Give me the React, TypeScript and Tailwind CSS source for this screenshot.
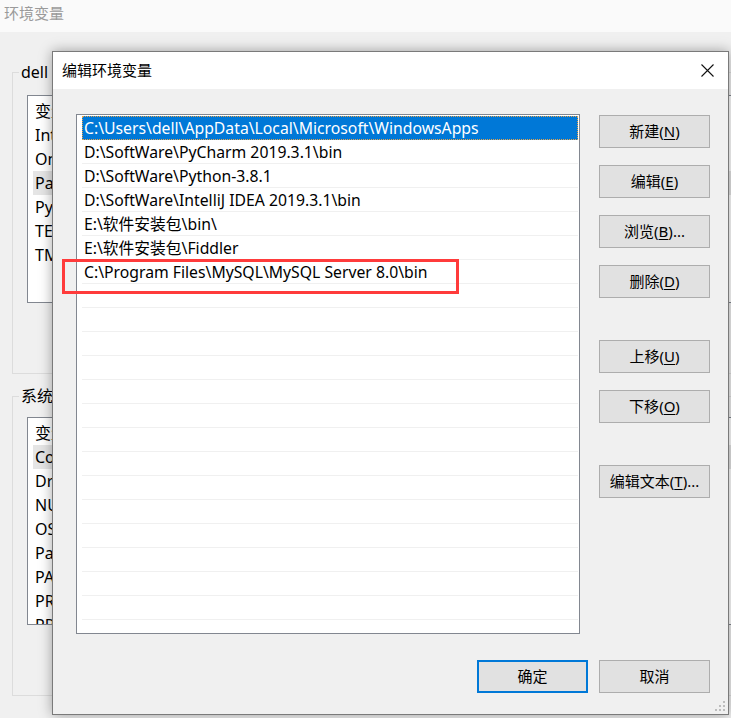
import React from "react";

const FONT = "font-['Noto_Sans','Noto_Sans_CJK_SC',sans-serif]";

const paths = [
  "C:\\Users\\dell\\AppData\\Local\\Microsoft\\WindowsApps",
  "D:\\SoftWare\\PyCharm 2019.3.1\\bin",
  "D:\\SoftWare\\Python-3.8.1",
  "D:\\SoftWare\\IntelliJ IDEA 2019.3.1\\bin",
  "E:\\软件安装包\\bin\\",
  "E:\\软件安装包\\Fiddler",
  "C:\\Program Files\\MySQL\\MySQL Server 8.0\\bin",
];

const userVars = ["IntelliJ IDEA", "OneDrive", "Path", "PyCharm", "TEMP", "TMP"];
const sysVars = [
  "ComSpec",
  "DriverData",
  "NUMBER_OF_PROCESSORS",
  "OS",
  "Path",
  "PATHEXT",
  "PROCESSOR_ARCHITECTURE",
  "PROCESSOR_IDENTIFIER",
];

function Btn({
  label,
  mn,
  suffix = "",
  primary = false,
}: {
  label: string;
  mn?: string;
  suffix?: string;
  primary?: boolean;
}) {
  return (
    <div
      className={`w-[111px] h-[33px] flex items-center justify-center bg-[#e1e1e1] text-[15px] text-black ${
        primary ? "border-2 border-[#0078d7]" : "border border-[#adadad]"
      }`}
    >
      <span>
        {label}
        {mn ? (
          <>
            (<span className="underline underline-offset-2">{mn}</span>)
          </>
        ) : null}
        {suffix}
      </span>
    </div>
  );
}

function ParentList({ rows, hl }: { rows: string[]; hl: number }) {
  return (
    <div className="ml-[14px] w-[720px] h-[208px] border border-[#828790] bg-white overflow-hidden text-[16px] text-black">
      <div className="h-[27px] flex items-center pl-[7px] pt-[2px]">
        <span className="w-[200px]">变量</span>
        <span>值</span>
      </div>
      {rows.map((r, i) => (
        <div
          key={i}
          className={`h-[24px] ml-[5px] pl-[2px] flex items-center ${
            i === hl ? "bg-[#e5e5e5]" : ""
          }`}
        >
          {r}
        </div>
      ))}
    </div>
  );
}

export default function App() {
  const rowCount = 22;
  return (
    <div className={`relative w-[731px] h-[718px] overflow-hidden bg-[#f0f0f0] ${FONT}`}>
      {/* Parent window */}
      <div className="h-[32px] bg-[#fafafa] flex items-center pl-[4px] pb-[5px] text-[15px] text-[#9a9a9a]">
        环境变量
      </div>
      <div className="pl-[12px] pt-[29px] flex flex-col gap-[11px]">
        <fieldset className="w-[760px] h-[313px] border border-[#dcdcdc]">
          <legend className="ml-[6px] px-[2px] text-[16px] text-black leading-[22px]">
            dell 的用户变量(U)
          </legend>
          <div className="mt-[12px]">
            <ParentList rows={userVars} hl={2} />
          </div>
        </fieldset>
        <fieldset className="w-[760px] h-[311px] border border-[#dcdcdc]">
          <legend className="ml-[6px] px-[2px] text-[16px] text-black leading-[22px]">
            系统变量(S)
          </legend>
          <div className="mt-[10px]">
            <ParentList rows={sysVars} hl={0} />
          </div>
        </fieldset>
      </div>

      {/* Dialog */}
      <div className="absolute left-[52px] top-[51px] w-[677px] h-[664px] border border-[#7a7a7a] bg-[#f0f0f0] flex flex-col shadow-[0_0_12px_rgba(0,0,0,0.35)]">
        <div className="h-[37px] bg-white flex items-center justify-between pl-[9px] pr-[14px] text-[15px] text-black">
          <span>编辑环境变量</span>
          <svg width="13" height="13" viewBox="0 0 13 13">
            <path d="M0.5 0.5 L12.5 12.5 M12.5 0.5 L0.5 12.5" stroke="#111" strokeWidth="1.1" />
          </svg>
        </div>
        <div className="flex-1 flex flex-col pt-[25px] pl-[23px] pr-[18px] pb-[21px]">
          <div className="flex gap-[19px]">
            <div className="w-[504px] h-[520px] border border-[#828790] bg-white overflow-hidden pt-[1px] pl-[5px] pr-[1px]">
              {Array.from({ length: rowCount }).map((_, i) => {
                const sel = i === 0;
                return (
                  <div
                    key={i}
                    className={`h-[24px] flex items-center pl-[2px] pt-[2px] text-[15.75px] whitespace-nowrap ${
                      sel
                        ? "bg-[#0078d7] text-white outline-1 outline-dotted outline-[#e8a34a] -outline-offset-1"
                        : "border-b border-[#f0f0f0] text-black"
                    }`}
                  >
                    {paths[i] ?? ""}
                  </div>
                );
              })}
            </div>
            <div className="mt-[1px] flex flex-col">
              <div className="flex flex-col gap-[17px]">
                <Btn label="新建" mn="N" />
                <Btn label="编辑" mn="E" />
                <Btn label="浏览" mn="B" suffix="..." />
                <Btn label="删除" mn="D" />
              </div>
              <div className="mt-[42px] flex flex-col gap-[17px]">
                <Btn label="上移" mn="U" />
                <Btn label="下移" mn="O" />
              </div>
              <div className="mt-[42px]">
                <Btn label="编辑文本" mn="T" suffix="..." />
              </div>
            </div>
          </div>
          <div className="mt-[26px] flex justify-end gap-[11px]">
            <Btn label="确定" primary />
            <Btn label="取消" />
          </div>
        </div>
        {/* resize grip */}
        <svg className="absolute right-[2px] bottom-[2px]" width="12" height="12" viewBox="0 0 12 12">
          <rect x="9" y="1" width="2" height="2" fill="#bdbdbd" />
          <rect x="5" y="5" width="2" height="2" fill="#bdbdbd" />
          <rect x="9" y="5" width="2" height="2" fill="#bdbdbd" />
          <rect x="1" y="9" width="2" height="2" fill="#bdbdbd" />
          <rect x="5" y="9" width="2" height="2" fill="#bdbdbd" />
          <rect x="9" y="9" width="2" height="2" fill="#bdbdbd" />
        </svg>
      </div>

      {/* Red annotation box */}
      <div className="absolute left-[62px] top-[259px] w-[397px] h-[35px] border-[3px] border-[#ff3b3b]" />
    </div>
  );
}
